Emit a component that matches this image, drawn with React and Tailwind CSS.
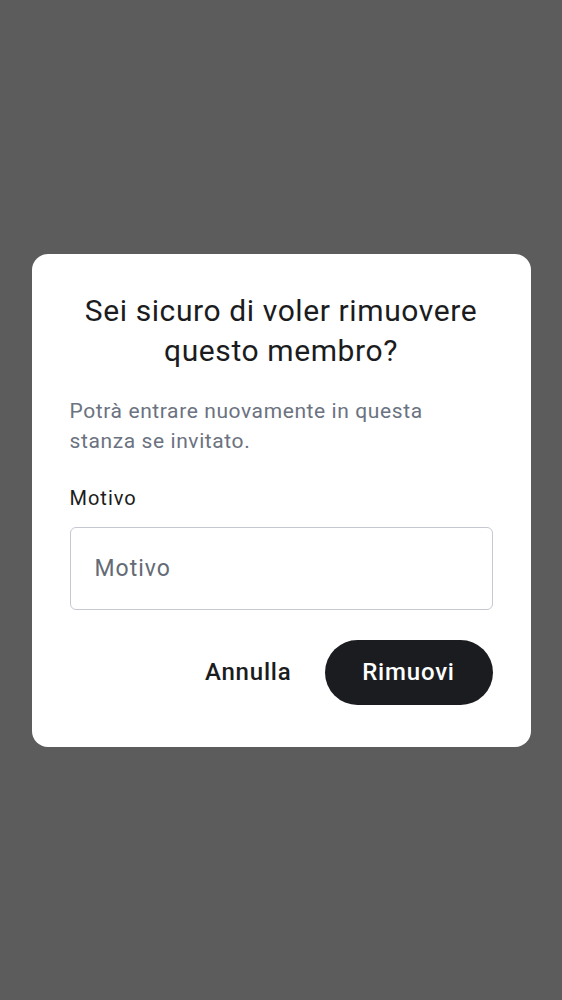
export default function App() {
  return (
    <div
      className="min-h-screen h-[1000px] bg-[#5c5c5c] flex items-center justify-center"
      style={{ fontFamily: "Roboto, 'Noto Sans', sans-serif" }}
    >
      <div className="w-[499px] bg-white rounded-[16px] px-[38px] pt-[37px] pb-[42px]">
        <h2 className="text-center text-[30px] leading-[40px] tracking-[0.6px] text-[#1b1c20]">
          Sei sicuro di voler rimuovere questo membro?
        </h2>
        <p className="mt-[25px] max-w-[400px] text-[21px] leading-[30px] tracking-[0.6px] text-[#6b7280]">
          Potrà entrare nuovamente in questa stanza se invitato.
        </p>
        <label className="block mt-[27px] text-[20px] leading-[30px] tracking-[1px] text-[#1b1c20]">
          Motivo
        </label>
        <input
          placeholder="Motivo"
          className="mt-[14px] w-full h-[83px] rounded-[6px] border border-[#c5c8d0] px-[24px] text-[23px] tracking-[1px] text-[#1b1c20] placeholder:text-[#646b75] outline-none"
        />
        <div className="mt-[30px] flex items-center justify-end gap-[33px]">
          <button className="text-[24px] font-medium tracking-[0.8px] text-[#1b1c20]">Annulla</button>
          <button className="h-[65px] w-[168px] rounded-full bg-[#1b1c20] text-white text-[24px] font-medium tracking-[0.8px]">
            Rimuovi
          </button>
        </div>
      </div>
    </div>
  );
}
